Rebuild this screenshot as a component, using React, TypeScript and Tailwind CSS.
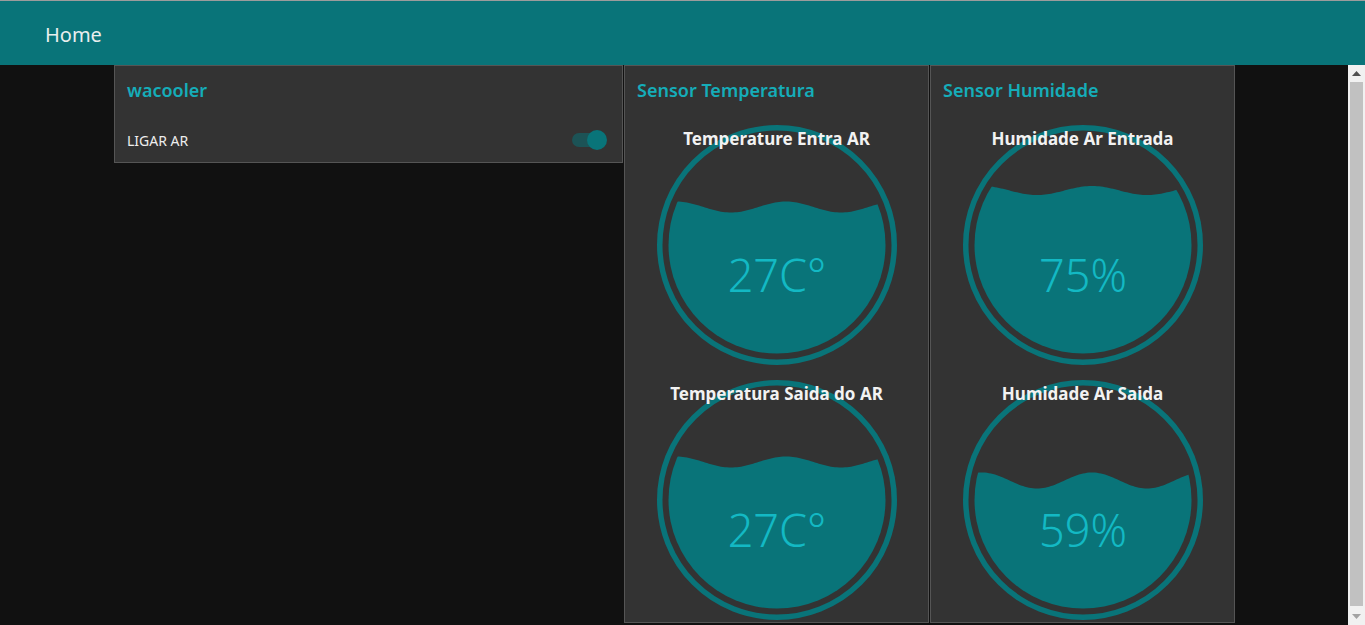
import React from "react";

const FONT = { fontFamily: '"Noto Sans", "Open Sans", sans-serif' };

function wavePath(mid: number, amp: number, phase: number) {
  const c = 121;
  const L = 110;
  let d = "";
  for (let x = -112; x <= 112; x += 2) {
    const y = mid - amp * Math.cos((2 * Math.PI * (x - phase)) / L);
    d += (x === -112 ? "M" : "L") + (c + x).toFixed(2) + " " + y.toFixed(2) + " ";
  }
  d += `L ${c + 112} 240 L ${c - 112} 240 Z`;
  return d;
}

function Gauge({ id, title, value, mid, amp }: { id: string; title: string; value: string; mid: number; amp: number }) {
  return (
    <div className="relative flex h-[242px] w-full justify-center">
      <svg width="242" height="242" viewBox="0 0 242 242" className="block">
        <defs>
          <clipPath id={id}>
            <circle cx="121" cy="121" r="108.5" />
          </clipPath>
        </defs>
        <circle cx="121" cy="121" r="117.25" fill="none" stroke="#097479" strokeWidth="5.5" />
        <path d={wavePath(mid, amp, 9)} fill="#097479" clipPath={`url(#${id})`} />
        <text
          x="121"
          y="168"
          textAnchor="middle"
          fill="#13b9c4"
          fontSize="45"
          fontWeight="300"
          style={FONT}
        >
          {value}
        </text>
      </svg>
      <div
        className="absolute left-0 right-0 top-[4px] text-center text-[17px] font-bold leading-[22px] text-[#f2f2f2]"
        style={FONT}
      >
        {title}
      </div>
    </div>
  );
}

export default function App() {
  return (
    <div className="flex h-[625px] w-[1365px] flex-col overflow-hidden bg-[#111111]" style={FONT}>
      <div className="h-[1px] bg-[#9c9c9c]" />
      <div className="flex h-[64px] items-center bg-[#097479] pl-[45px] pt-[4px]">
        <span className="text-[20px] leading-[26px] text-[#e8eeee]">Home</span>
      </div>
      <div className="flex min-h-0 flex-1">
        <div className="flex flex-1 items-start gap-[1px] pl-[114px]">
          <div className="w-[509px] border border-[#555555] bg-[#333333]">
            <div className="px-[12px] pt-[12px] text-[18px] font-semibold leading-[24px] text-[#15adb9]">wacooler</div>
            <div className="flex h-[60px] items-center justify-between pl-[12px] pr-[16px] pt-[16px]">
              <span className="text-[14px] text-[#eeeeee]">LIGAR AR</span>
              <div className="relative h-[14px] w-[34px] rounded-full bg-[#1c5356]">
                <div className="absolute right-[-1px] top-[-3px] h-[20px] w-[20px] rounded-full bg-[#097479]" />
              </div>
            </div>
          </div>
          <div className="h-[558px] w-[305px] border border-[#555555] bg-[#333333]">
            <div className="h-[58px] px-[12px] pt-[12px] text-[18px] font-semibold leading-[24px] text-[#15adb9]">
              Sensor Temperatura
            </div>
            <div className="flex flex-col gap-[13px]">
              <Gauge id="g1" title="Temperature Entra AR" value="27C°" mid={83} amp={5.5} />
              <Gauge id="g2" title="Temperatura Saida do AR" value="27C°" mid={83} amp={5.5} />
            </div>
          </div>
          <div className="h-[558px] w-[305px] border border-[#555555] bg-[#333333]">
            <div className="h-[58px] px-[12px] pt-[12px] text-[18px] font-semibold leading-[24px] text-[#15adb9]">
              Sensor Humidade
            </div>
            <div className="flex flex-col gap-[13px]">
              <Gauge id="g3" title="Humidade Ar Entrada" value="75%" mid={66.5} amp={4.5} />
              <Gauge id="g4" title="Humidade Ar Saida" value="59%" mid={101.5} amp={8} />
            </div>
          </div>
        </div>
        <div className="flex w-[17px] flex-col items-center bg-[#f1f1f1]">
          <div className="flex h-[17px] items-center justify-center">
            <svg width="9" height="5" viewBox="0 0 9 5">
              <path d="M0 5 L4.5 0 L9 5 Z" fill="#505050" />
            </svg>
          </div>
          <div className="mb-[2px] w-[13px] flex-1 bg-[#c1c1c1]" />
          <div className="flex h-[17px] items-center justify-center">
            <svg width="9" height="5" viewBox="0 0 9 5">
              <path d="M0 0 L9 0 L4.5 5 Z" fill="#a3a3a3" />
            </svg>
          </div>
        </div>
      </div>
    </div>
  );
}
